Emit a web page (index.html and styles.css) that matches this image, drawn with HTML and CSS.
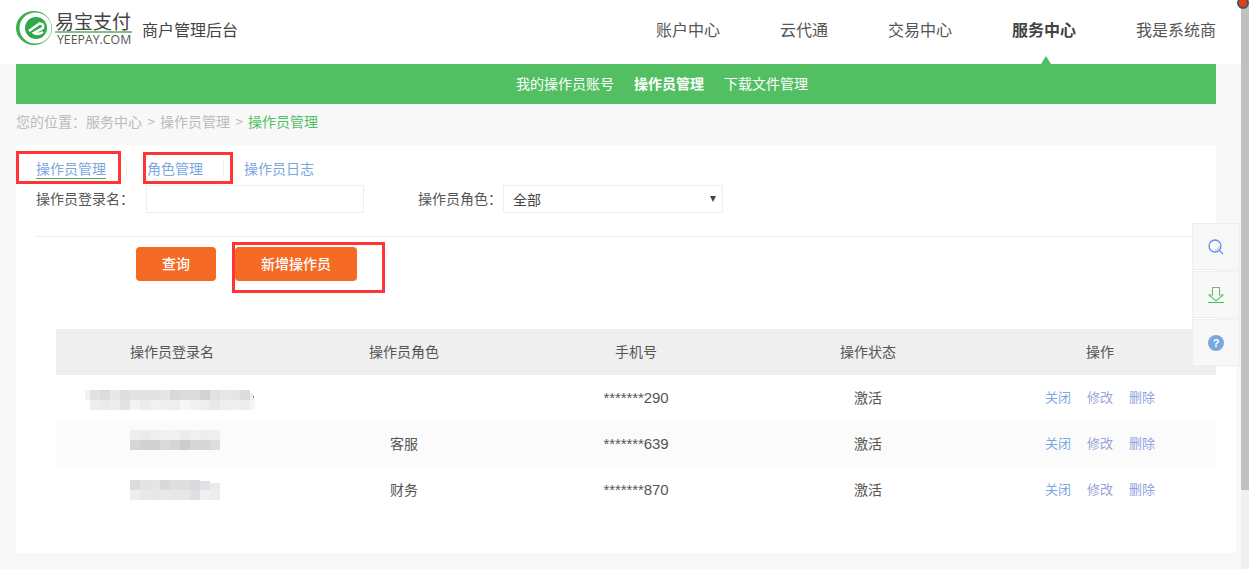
FILE: index.html
```html
<!DOCTYPE html>
<html lang="zh">
<head>
<meta charset="utf-8">
<title>操作员管理</title>
<link rel="stylesheet" href="styles.css">
</head>
<body>
<header class="top">
  <div class="brand">
    <svg class="logo-mark" width="40" height="40" viewBox="0 0 40 40">
      <path fill-rule="evenodd" d="M1 20a18 17 0 1 0 36 0a18 17 0 1 0 -36 0ZM4.500 20a16 15.500 0 1 0 32 0a16 15.500 0 1 0 -32 0Z" fill="#3aaf4c"/>
      <path d="M30 6A17 17 0 0 1 37 16" fill="none" stroke="#fff" stroke-width="1"/>
      <circle cx="21" cy="20" r="11" fill="#2fa84a"/>
      <path d="M14 23 L24.500 15.500 Q29 15.500 28 20 L19 25 Q22.500 27.500 28 24" fill="none" stroke="#fff" stroke-width="2.600"/>
    </svg>
    <div class="logo-text">
      <span class="logo-cn">易宝支付</span>
      <span class="logo-en">YEEPAY.COM</span>
    </div>
    <span class="brand-title">商户管理后台</span>
  </div>
  <nav class="main-nav">
    <a>账户中心</a>
    <a>云代通</a>
    <a>交易中心</a>
    <a class="current">服务中心</a>
    <a>我是系统商</a>
  </nav>
</header>
<nav class="sub-nav">
  <a>我的操作员账号</a>
  <a class="current">操作员管理</a>
  <a>下载文件管理</a>
</nav>
<div class="crumbs">您的位置<span class="colon">：</span>服务中心 &gt; 操作员管理 &gt; <span class="crumb-here">操作员管理</span></div>
<main class="card">
  <div class="tabs">
    <a class="tab active"><span>操作员管理</span></a>
    <a class="tab"><span>角色管理</span></a>
    <a class="tab"><span>操作员日志</span></a>
  </div>
  <form class="filters">
    <label class="f-label f-login">操作员登录名<span class="colon">：</span></label>
    <input class="f-input" type="text">
    <label class="f-label f-role">操作员角色<span class="colon">：</span></label>
    <div class="f-select-wrap">
      <select class="f-select"><option>全部</option></select>
    </div>
  </form>
  <div class="rule"></div>
  <div class="actions">
    <button class="btn btn-query" type="button">查询</button>
    <button class="btn btn-add" type="button">新增操作员</button>
  </div>
  <section class="table-wrap">
    <table class="grid">
      <thead>
        <tr><th>操作员登录名</th><th>操作员角色</th><th>手机号</th><th>操作状态</th><th>操作</th></tr>
      </thead>
      <tbody>
        <tr>
          <td class="masked masked-a">
            <svg class="mosaic mosaic-wide" width="172" height="20" viewBox="0 0 172 20" shape-rendering="crispEdges">
              <rect x="0" y="0" width="5" height="10" fill="#f0f1f1"/>
              <rect x="5" y="0" width="10" height="10" fill="#e0e2e4"/><rect x="15" y="0" width="10" height="10" fill="#dcdcdc"/><rect x="25" y="0" width="10" height="10" fill="#e6e7e7"/><rect x="35" y="0" width="10" height="10" fill="#dddddd"/><rect x="45" y="0" width="10" height="10" fill="#e0e2e3"/><rect x="55" y="0" width="10" height="10" fill="#e4e1de"/><rect x="65" y="0" width="10" height="10" fill="#e0e2e4"/><rect x="75" y="0" width="10" height="10" fill="#e5e7e7"/><rect x="85" y="0" width="10" height="10" fill="#dad8d7"/><rect x="95" y="0" width="10" height="10" fill="#dcdcdc"/><rect x="105" y="0" width="10" height="10" fill="#dcdbdb"/><rect x="115" y="0" width="10" height="10" fill="#d4d2d1"/><rect x="125" y="0" width="10" height="10" fill="#dfe2e3"/><rect x="135" y="0" width="10" height="10" fill="#e6e7e7"/><rect x="145" y="0" width="10" height="10" fill="#e6e6e6"/><rect x="155" y="0" width="10" height="10" fill="#dedcdb"/><rect x="165" y="3" width="3" height="7" fill="#eceeef"/><rect x="168" y="6" width="1" height="2" fill="#6f86c8"/>
              <rect x="5" y="10" width="10" height="10" fill="#eeeeee"/><rect x="15" y="10" width="10" height="10" fill="#e8eaec"/><rect x="25" y="10" width="10" height="10" fill="#efedeb"/><rect x="35" y="10" width="10" height="10" fill="#e2e2e2"/><rect x="45" y="10" width="10" height="10" fill="#f1f3f4"/><rect x="55" y="10" width="10" height="10" fill="#eeecea"/><rect x="65" y="10" width="10" height="10" fill="#f0f2f3"/><rect x="75" y="10" width="10" height="10" fill="#efefef"/><rect x="85" y="10" width="10" height="10" fill="#eeeeee"/><rect x="95" y="10" width="10" height="10" fill="#f5f6f6"/><rect x="105" y="10" width="10" height="10" fill="#f0f1f1"/><rect x="115" y="10" width="10" height="10" fill="#eeeeee"/><rect x="125" y="10" width="10" height="10" fill="#eae8e6"/><rect x="135" y="10" width="10" height="10" fill="#eeeeee"/><rect x="145" y="10" width="10" height="10" fill="#efefef"/><rect x="155" y="10" width="10" height="10" fill="#eeeded"/><rect x="165" y="10" width="5" height="10" fill="#f4f6f7"/>
            </svg>
          </td>
          <td></td><td class="num">*******290</td><td>激活</td>
          <td class="ops"><a class="op">关闭</a><a class="op">修改</a><a class="op">删除</a></td>
        </tr>
        <tr>
          <td class="masked masked-b">
            <svg class="mosaic" width="90" height="20" viewBox="0 0 90 20" shape-rendering="crispEdges">
              <rect x="0" y="0" width="10" height="10" fill="#eeeeee"/><rect x="10" y="0" width="10" height="10" fill="#ebebeb"/><rect x="20" y="0" width="10" height="10" fill="#edeeee"/><rect x="30" y="0" width="10" height="10" fill="#eff0f0"/><rect x="40" y="0" width="10" height="10" fill="#f1f1f1"/><rect x="50" y="0" width="10" height="10" fill="#ececec"/><rect x="60" y="0" width="10" height="10" fill="#f0f0f0"/><rect x="70" y="0" width="10" height="10" fill="#eeecec"/><rect x="80" y="0" width="10" height="10" fill="#eceeef"/>
              <rect x="0" y="10" width="10" height="10" fill="#d6d6d6"/><rect x="10" y="10" width="10" height="10" fill="#d2d1d1"/><rect x="20" y="10" width="10" height="10" fill="#ced0d2"/><rect x="30" y="10" width="10" height="10" fill="#dadada"/><rect x="40" y="10" width="10" height="10" fill="#d6d5d5"/><rect x="50" y="10" width="10" height="10" fill="#cdcdcf"/><rect x="60" y="10" width="10" height="10" fill="#d7d6d6"/><rect x="70" y="10" width="10" height="10" fill="#d8d5d4"/><rect x="80" y="10" width="10" height="10" fill="#dcdee0"/>
            </svg>
          </td>
          <td>客服</td><td class="num">*******639</td><td>激活</td>
          <td class="ops"><a class="op">关闭</a><a class="op">修改</a><a class="op">删除</a></td>
        </tr>
        <tr>
          <td class="masked masked-c">
            <svg class="mosaic" width="90" height="20" viewBox="0 0 90 20" shape-rendering="crispEdges">
              <rect x="0" y="0" width="10" height="10" fill="#dcdcdc"/><rect x="10" y="0" width="10" height="10" fill="#e3e4e6"/><rect x="20" y="0" width="10" height="10" fill="#e4e5e5"/><rect x="30" y="0" width="10" height="10" fill="#dad9d8"/><rect x="40" y="0" width="10" height="10" fill="#dddfe0"/><rect x="50" y="0" width="10" height="10" fill="#dfdedd"/><rect x="60" y="0" width="10" height="10" fill="#d9dade"/><rect x="70" y="1" width="10" height="9" fill="#e2e0e0"/><rect x="80" y="3" width="10" height="7" fill="#e8eaeb"/>
              <rect x="0" y="10" width="10" height="10" fill="#eeeeee"/><rect x="10" y="10" width="10" height="10" fill="#e8e8e8"/><rect x="20" y="10" width="10" height="10" fill="#e7e7e7"/><rect x="30" y="10" width="10" height="10" fill="#e9e9e8"/><rect x="40" y="10" width="10" height="10" fill="#e6e7e8"/><rect x="50" y="10" width="10" height="10" fill="#e7e7e7"/><rect x="60" y="10" width="10" height="10" fill="#dfe0e3"/><rect x="70" y="10" width="10" height="10" fill="#f0f0f0"/><rect x="80" y="10" width="10" height="10" fill="#eceeef"/>
            </svg>
          </td>
          <td>财务</td><td class="num">*******870</td><td>激活</td>
          <td class="ops"><a class="op">关闭</a><a class="op">修改</a><a class="op">删除</a></td>
        </tr>
      </tbody>
    </table>
  </section>
  <div class="mark mark-a"></div>
  <div class="mark mark-b"></div>
  <div class="mark mark-c"></div>
</main>
<aside class="float-tools">
  <a class="tool">
    <svg width="18" height="18" viewBox="0 0 18 18">
      <circle cx="8" cy="8" r="6" fill="none" stroke="#5f8ff0" stroke-width="1.300"/>
      <path d="M12.500 12.500L16 16" stroke="#5f8ff0" stroke-width="1.300" fill="none"/>
      <path d="M8 12a4 4 0 0 0 4-4" stroke="#d0b8e0" stroke-width="1.300" fill="none"/>
    </svg>
  </a>
  <a class="tool">
    <svg width="18" height="18" viewBox="0 0 18 18">
      <path d="M5.500 1.500H12.500V9H16L9 15L2 9H5.500Z" fill="none" stroke="#62c46f" stroke-width="1.100"/>
      <path d="M1 16.500H17" stroke="#4fbc60" stroke-width="1.100" fill="none"/>
    </svg>
  </a>
  <a class="tool"><span class="help">?</span></a>
</aside>
<div class="scroll-track"><div class="scroll-thumb"></div></div>
<div class="scroll-dot"></div>
</body>
</html>
```

FILE: styles.css
```css
* { box-sizing: border-box; }
html, body { margin: 0; padding: 0; height: 569px; overflow: hidden; }
body {
  width: 1241px;
  background: #f8f8f8;
  font-family: "Noto Sans CJK SC", "Noto Sans", sans-serif;
  font-size: 14px;
  color: #555;
}
a { text-decoration: none; }
.colon { font-family: "Noto Sans CJK TC", sans-serif; }

/* header */
.top {
  height: 64px;
  background: #fff;
  padding: 0 25px 0 16px;
  display: flex;
  justify-content: space-between;
  align-items: center;
}
.brand { display: flex; align-items: center; height: 64px; }
.logo-mark { margin: -8px 0 0 -1px; }
.logo-text { display: flex; flex-direction: column; margin: -7px 0 0 0; width: 77px; }
.logo-cn {
  font-size: 19px;
  line-height: 19px;
  color: #444;
  font-weight: 400;
  border-bottom: 2px solid #7cc487;
  padding-bottom: 1px;
  white-space: nowrap;
}
.logo-en {
  font-family: "Open Sans", sans-serif;
  font-size: 12.300px;
  line-height: 12px;
  color: #555;
  margin: 1px 0 0 2px;
  white-space: nowrap;
}
.brand-title { font-size: 16px; line-height: 24px; color: #444; margin: -6px 0 0 10px; }
.main-nav { display: flex; gap: 60px; font-size: 16px; line-height: 24px; color: #555; padding-bottom: 6px; }
.main-nav .current { font-weight: 700; color: #444; position: relative; }
.main-nav .current::after {
  content: "";
  position: absolute;
  left: 29px;
  top: 39px;
  border: 5px solid transparent;
  border-top: 0;
  border-bottom: 8px solid #52bf63;
}

/* green bar */
.sub-nav {
  margin-left: 16px;
  width: 1200px;
  height: 40px;
  background: #52bf63;
  color: #fff;
  display: flex;
  align-items: center;
  gap: 20px;
  padding: 0 0 2px 500px;
}
.sub-nav .current { font-weight: 700; }

.crumbs { height: 41px; padding-left: 16px; line-height: 34px; color: #bbb; word-spacing: 2px; }
.crumb-here { color: #52bf63; }

/* card */
.card { position: relative; margin-left: 16px; width: 1200px; height: 408px; background: #fff; }
.tabs { display: flex; height: 40px; padding-top: 16px; }
.tab { padding: 0 20px; height: 16px; line-height: 14px; color: #7ba7df; border-right: 1px solid #eee; }
.tab:last-child { border-right: 0; }
.tab span { display: block; height: 18px; }
.tab.active span { border-bottom: 1px solid #3fb950; }

.filters { display: flex; align-items: center; height: 28px; padding-left: 20px; }
.f-label { color: #555; padding-bottom: 2px; }
.f-login { width: 110px; }
.f-input { width: 218px; height: 28px; border: 1px solid #eee; background: #fff; padding: 0 9px; }
.f-role { margin-left: 54px; width: 85px; }
.f-select-wrap { position: relative; width: 220px; height: 28px; }
.f-select-wrap::after {
  content: "";
  position: absolute;
  right: 7px;
  top: 11px;
  border: 3px solid transparent;
  border-bottom: 0;
  border-top: 6px solid #444;
}
.f-select {
  appearance: none;
  width: 100%;
  height: 100%;
  border: 1px solid #eee;
  border-radius: 0;
  background: #fff;
  padding: 0 9px 1px;
  font: inherit;
  color: #444;
}
.rule { height: 1px; margin: 23px 0 0 20px; background: #eee; }
.actions { display: flex; gap: 19px; margin: 10px 0 0 120px; }
.btn {
  height: 34px;
  border: 0;
  border-radius: 4px;
  background: #f56a25;
  color: #fff;
  font: inherit;
  font-weight: 500;
  padding: 0 0 2px;
}
.btn-query { width: 80px; }
.btn-add { width: 122px; }

/* table */
.table-wrap {
  margin: 48px -20px 0 0;
  padding: 0 20px 40px 40px;
  background: #fff;
}
.grid { width: 1160px; border-collapse: collapse; table-layout: fixed; }
.grid th { height: 46px; background: #efefef; font-weight: 400; color: #555; text-align: center; padding: 0 0 2px; }
.grid td { height: 46px; text-align: center; padding: 0 0 2px; color: #555; }
.grid tbody tr:nth-child(2) td { background: #fbfbfb; }
.grid .num { font-family: "Liberation Sans", sans-serif; font-size: 15px; letter-spacing: -0.1px; }
.mosaic { display: block; margin-left: 74px; }
.mosaic-wide { margin-left: 29px; }
.grid .masked-a { padding: 4px 0 0; }
.grid .masked-b { padding: 0 0 8px; }
.grid .masked-c { padding: 0; }
.grid .ops { font-size: 13px; padding-bottom: 4px; }
.op { color: #7ba7df; margin: 0 8px; }
.op:nth-child(2) { color: #9aa3d8; }
.op:nth-child(3) { color: #8ea3e0; }

/* annotations */
.mark { position: absolute; border: 3px solid #ff3434; }
.mark-a { left: 0; top: 6px; width: 105px; height: 33px; }
.mark-b { left: 127px; top: 7px; width: 90px; height: 32px; }
.mark-c { left: 216px; top: 97px; width: 153px; height: 51px; }

/* floating tools */
.float-tools { position: absolute; left: 1192px; top: 223px; display: flex; flex-direction: column; gap: 1px; }
.tool {
  width: 48px;
  height: 47px;
  background: #f8f8f8;
  border: 1px solid #eee;
  display: flex;
  align-items: center;
  justify-content: center;
}
.help {
  width: 16px;
  height: 16px;
  border-radius: 50%;
  background: #7aa7e0;
  color: #fff;
  font: 700 11px/16px "Liberation Sans", sans-serif;
  text-align: center;
}

/* scrollbar */
.scroll-track { position: absolute; left: 1241px; top: 0; width: 8px; height: 569px; background: #f0f0f0; }
.scroll-thumb { height: 490px; background: #c0c0c0; }
.scroll-dot {
  position: absolute;
  left: 1237px;
  top: -3px;
  width: 12px;
  height: 12px;
  border-radius: 50%;
  background: #e0401c;
  border: 2px solid #4a5560;
}
```
